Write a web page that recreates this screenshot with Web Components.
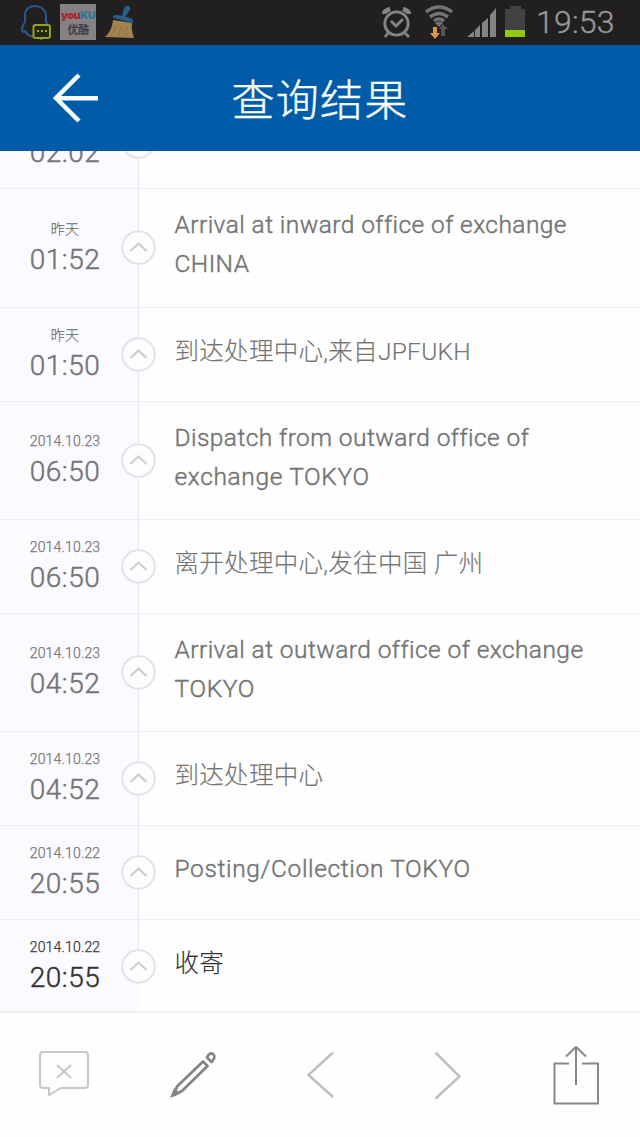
<!DOCTYPE html>
<html lang="zh-CN">
<head>
<meta charset="utf-8">
<title>查询结果</title>
<style>
html,body{margin:0;height:100%}
body{background:#fefefe;overflow:hidden;font-family:Roboto,"Noto Sans CJK SC",sans-serif}
</style>
</head>
<body>
<tracking-app></tracking-app>
<script>
const define = (name, html, setup) => customElements.define(name, class extends HTMLElement {
  connectedCallback() {
    if (this.shadowRoot) return;
    const t = document.createElement('template');
    t.innerHTML = html;
    this.attachShadow({mode: 'open'}).append(t.content.cloneNode(true));
    if (setup) setup(this, this.shadowRoot);
  }
});

define('status-bar', `<style>
:host{display:flex;align-items:center;justify-content:space-between;height:45px;background:#211f1f;padding:0 26px 0 20px;box-sizing:border-box;color:#989898}
.group{display:flex;height:45px}
svg{display:block}
.youku{width:36px;height:36px;margin:4px 0 0 8px;background:#858284;display:flex;flex-direction:column;align-items:center;font:900 11px/14px Inter,sans-serif;letter-spacing:-.6px;box-sizing:border-box;padding-top:4px}
.youku span{display:block;height:14px;color:#a82631}
.youku i{font-style:normal;color:#287997}
.youku b{font:700 11px/14px "Noto Sans CJK SC",sans-serif;color:#403c40;height:14px}
time{font-size:32px;line-height:44px;letter-spacing:.2px;font-weight:300;width:78px;white-space:nowrap;-webkit-text-stroke:.35px #989898}
</style>
<div class="group">
<svg width="32" height="45" viewBox="20 0 32 45" fill="none"><path d="M25 32q-3 0-3-2 0-4 3-8V15C25 9 30 6 35 6s11 3 11 11v5l2 4M25 30q1 5 8 7" stroke="#27598d" stroke-width="2"/><rect x="33.500" y="25" width="16.500" height="13" rx="2" stroke="#91a21b" stroke-width="2" fill="#24270b"/><path d="M39 38l2 2 3-2" fill="#91a21b"/><path d="M37 31h2m2 0h2m2 0h2" stroke="#9aab35" stroke-width="2"/></svg>
<div class="youku"><span>you<i>KU</i></span><b>优酷</b></div>
<svg width="44" height="45" viewBox="96 0 44 45"><path d="M113 18q0-4 5-3l4 1 2-8q3-4 6-1 1 3-3 7l-1 3 4 1q4 1 3 5z" fill="#285f88"/><path d="M113 20l19 3q-1 7 2 15l-29-1q7-6 8-17z" fill="#a3834d"/><path d="M116 26l-5 10m10-9l-3 9m9-9l-1 9" stroke="#8c7040" fill="none"/></svg>
</div>
<div class="group">
<svg width="154" height="45" viewBox="378 0 154 45" fill="none"><g stroke="#858585" stroke-width="2.800"><circle cx="396.500" cy="23.500" r="11.700"/><path d="M391 21l5 5 7-7M388 33l-3 4m20-4l4 4"/><path d="M384 14q0-3 6-5m19 5q0-3-6-5" stroke-width="4.500"/></g>
<path d="M426 12q13-10 26 0M430 17q9-7 18 0M434 21q5-4 10 0" stroke="#737373" stroke-width="3.500"/><path d="M435 23q4-3 8 0l-4 4z" fill="#737373"/><path d="M433 27h4v6h3l-5 6-5-6h3z" fill="#d99743"/><path d="M441 36h4v-7h3l-5-5-4 5h2z" fill="#555"/>
<g fill="#858585"><path d="M467 37l7-6v6zM475 30l5-5v12h-5zM482 23l6-5v19h-6zM490 15l6-7v29h-6z"/></g><path d="M505 9h5V6h11v3h4v28h-20z" fill="#424242"/><path d="M505 30h20v7h-20z" fill="#92ca0b"/></svg>
<time style="margin-left:4px">19:53</time>
</div>`);

define('title-bar', `<style>
:host{display:grid;grid-template-columns:150px 340px 150px;align-items:center;height:106px;background:#005ba9;position:relative;z-index:2}
svg{display:block;margin-left:48px}
h1{margin:0;font:300 43px/60px "Noto Sans CJK SC",sans-serif;letter-spacing:1.300px;text-align:center;color:#f8fdff;-webkit-text-stroke:.4px #f8fdff;padding:0 0 2px}
</style>
<svg width="52" height="52" viewBox="48 71 52 52" fill="none" stroke="#f5faff" stroke-width="4.500"><path d="M79 74L56 97l23 23M55 97.200h43"/></svg>
<h1><slot></slot></h1>`);

define('track-row', `<style>
:host{display:grid;grid-template-columns:138px 1fr;height:94px;color:#747474;position:relative;box-sizing:border-box;border-top:1px solid #f0eef2}
:host([tall]){height:118px}
:host([tall="first"]){height:119px}
.when{display:flex;flex-direction:column;align-items:center;justify-content:center;background:#fbfaff;border-right:1px solid #e8e6ec;padding:0 8px 0 0;box-sizing:border-box;width:139px}
.date{font-size:14px;line-height:18px;letter-spacing:.18px;height:22px;font-weight:300;-webkit-text-stroke:.25px}
.time{font-size:28px;line-height:36px;letter-spacing:.5px;height:35px;font-weight:300;-webkit-text-stroke:.45px}
.text{display:flex;align-items:center;padding:0 20px 8px 36.500px;font-size:24.500px;line-height:39px;white-space:pre-line;letter-spacing:.44px;font-weight:300;-webkit-text-stroke:.45px}
:host([cjk]) .text{letter-spacing:.3px;-webkit-text-stroke:.15px;padding-bottom:6px}
:host([current]){color:#333}
.dot{position:absolute;left:121px;top:calc(50% - 18px)}
:host([current]) .when{border-right-color:transparent}
.stub{display:none;position:absolute;left:138px;top:0;width:1px;height:30px;background:#e8e6ec}
:host([current]) .stub{display:block}
</style>
<div class="when"><div class="date"></div><div class="time"></div></div>
<div class="text"><div><slot></slot></div></div><i class="stub"></i>
<svg class="dot" width="35" height="35" fill="none"><circle cx="17.500" cy="17.500" r="16.300" fill="#fdfcfe" stroke="#e4e2e7" stroke-width="2"/><path d="M9.500 21l8-7.500 8 7.500" stroke="#cfcdd2" stroke-width="2.300"/></svg>`,
(el, root) => {
  root.querySelector('.date').textContent = el.getAttribute('date');
  root.querySelector('.time').textContent = el.getAttribute('time');
});

define('track-list', `<style>
:host{display:flex;flex-direction:column;justify-content:flex-end;height:862px;overflow:hidden;border-bottom:2px solid #f3f1f5;box-sizing:border-box}
::slotted(*){flex:none}
::slotted(:last-child){margin-bottom:-2px}
</style><slot></slot>`);

define('tool-bar', `<style>
:host{display:grid;grid-template-columns:repeat(5,128px);height:124px}
svg{display:block;width:128px;height:124px}
</style>
<svg viewBox="0 1013 128 124" fill="none" stroke="#c8c8c8" stroke-width="2"><path d="M43 1052h42q3 0 3 3v30q0 3-3 3H61l-12 7v-7h-6q-3 0-3-3v-30q0-3 3-3z"/><path d="M57 1065l14 13m0-13l-14 13"/></svg>
<svg viewBox="128 1013 128 124" fill="none" stroke="#858585" stroke-width="2.800" stroke-linejoin="round"><path d="M203 1061.500l4.500 4.500-25.500 25-8 4 3-8.500z"/><path d="M207 1057.500q2.500-5.500 6-3.500 3.500 3-1.500 8z"/><path d="M170 1098l4-10 6.500 5.500z" fill="#858585" stroke="none"/></svg>
<svg viewBox="256 1013 128 124" fill="none" stroke="#c0c0c0" stroke-width="2.500"><path d="M333 1052.500L308.500 1075l24.500 22"/></svg>
<svg viewBox="384 1013 128 124" fill="none" stroke="#c0c0c0" stroke-width="2.500"><path d="M435.500 1052.500l24 24-24 22"/></svg>
<svg viewBox="512 1013 128 124" fill="none" stroke="#888" stroke-width="2"><path d="M569 1063.500h-14.500V1103.500H598v-40h-16M576 1085v-38M566 1056.500l10-9.500 10 9.500"/></svg>`);

define('tracking-app', `<style>
:host{display:flex;flex-direction:column;width:640px;height:1137px;overflow:hidden}
.wide{letter-spacing:.65px}
</style>
<status-bar></status-bar>
<title-bar>查询结果</title-bar>
<track-list>
<track-row date="" time="02:02"></track-row>
<track-row tall="first" date="昨天" time="01:52">Arrival at inward office of exchange
CHINA</track-row>
<track-row cjk date="昨天" time="01:50">到达处理中心,来自JPFUKH</track-row>
<track-row tall date="2014.10.23" time="06:50">Dispatch from outward office of
<span class="wide">exchange TOKYO</span></track-row>
<track-row cjk date="2014.10.23" time="06:50">离开处理中心,发往中国 广州</track-row>
<track-row tall date="2014.10.23" time="04:52">Arrival at outward office of exchange
<span class="wide">TOKYO</span></track-row>
<track-row cjk date="2014.10.23" time="04:52">到达处理中心</track-row>
<track-row date="2014.10.22" time="20:55"><span class="wide">Posting/Collection TOKYO</span></track-row>
<track-row cjk current date="2014.10.22" time="20:55">收寄</track-row>
</track-list>
<tool-bar></tool-bar>`);
</script>
</body>
</html>
